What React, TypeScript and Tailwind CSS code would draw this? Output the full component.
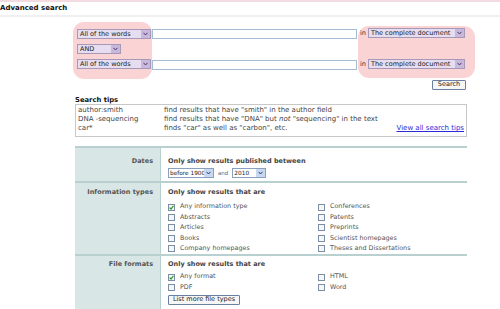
import type { ReactNode } from "react";

const font = { fontFamily: '"DejaVu Sans", Verdana, sans-serif' };

function Chevron({ color }: { color: string }) {
  return (
    <svg width="5" height="4" viewBox="0 0 5 4">
      <path d="M0.5 0.8 L2.5 3 L4.5 0.8" fill="none" stroke={color} strokeWidth="1" />
    </svg>
  );
}

function Select({ label, width, tone = "lavender" }: { label: string; width: string; tone?: "lavender" | "blue" }) {
  const lav = tone === "lavender";
  return (
    <div className={`flex h-[10px] items-stretch border ${lav ? "border-[#a898b8] bg-[#e6def0]" : "border-[#8aa0c0] bg-white"} ${width}`}>
      <span
        className={`flex-1 overflow-hidden whitespace-nowrap leading-[8px] text-[#222] ${
          lav ? "pl-[2px] text-[6.5px]" : "pl-[1px] text-[5.8px]"
        }`}
      >
        {label}
      </span>
      <span className={`flex h-full w-[9px] items-center justify-center ${lav ? "bg-[#c8b8dc]" : "bg-[#c8d8f0]"}`}>
        <Chevron color={lav ? "#4a3a6a" : "#2a3a6a"} />
      </span>
    </div>
  );
}

function Check({ label, checked = false }: { label: string; checked?: boolean }) {
  return (
    <div className="flex h-[10.4px] items-center gap-[5px]">
      <span className="flex h-[7px] w-[7px] items-center justify-center border border-[#7d8ea4] bg-[#f4f6f8]">
        {checked && (
          <svg width="5" height="5" viewBox="0 0 5 5">
            <path d="M0.6 2.6 L2 4 L4.4 0.8" fill="none" stroke="#2a9a2a" strokeWidth="1.2" />
          </svg>
        )}
      </span>
      <span className="text-[6.4px] text-[#555]">{label}</span>
    </div>
  );
}

function Row({ label, children, top, last = false }: { label: string; children: ReactNode; top: string; last?: boolean }) {
  return (
    <div className={`flex ${last ? "" : "border-b-2 border-[#b8d0d0]"}`}>
      <div className={`w-[85px] shrink-0 bg-[#d8e6e6] pr-[7px] text-right text-[6.5px] font-bold leading-[8px] text-[#555] ${top}`}>
        {label}
      </div>
      <div className={`flex-1 border-l border-[#b8d0d0] pl-[7px] ${top}`}>{children}</div>
    </div>
  );
}

export default function App() {
  return (
    <div className="h-[309px] w-[500px] overflow-hidden bg-white text-[#333]" style={font}>
      <div className="h-[2px] bg-[#f2dce2]" />
      <div className="border-b-2 border-[#f0f0f0] pb-[2px] pt-[2px] text-[7px] font-bold leading-[9px] text-[#111]">
        Advanced search
      </div>

      <div className="ml-[73px] mt-[5px] flex">
        <div className="flex h-[57px] w-[79px] flex-col gap-[5px] rounded-[11px] bg-[#fad4d4] pl-[4px] pt-[7px]">
          <Select label="All of the words" width="w-[74px]" />
          <Select label="AND" width="w-[44px]" />
          <Select label="All of the words" width="w-[74px]" />
        </div>
        <div className="flex w-[206px] flex-col gap-[21px] pt-[7px]">
          <div className="h-[10px] w-[205px] border border-[#a4bcd4] bg-white" />
          <div className="h-[10px] w-[205px] border border-[#a4bcd4] bg-white" />
        </div>
        <div className="mt-[4px] flex h-[52px] w-[117px] flex-col gap-[21px] rounded-[11px] bg-[#fad4d4] pl-[2px] pt-[2px]">
          <div className="flex items-center gap-[2px]">
            <span className="text-[6.5px] leading-[10px] text-[#333]">in</span>
            <Select label="The complete document" width="w-[97px]" />
          </div>
          <div className="flex items-center gap-[2px]">
            <span className="text-[6.5px] leading-[10px] text-[#333]">in</span>
            <Select label="The complete document" width="w-[97px]" />
          </div>
        </div>
      </div>

      <div className="ml-[432px] mt-[1px] flex h-[10px] w-[34px] items-center justify-center rounded-[1px] border border-[#6a80a0] bg-[#f6f6f6] text-[6.5px] text-[#222]">
        Search
      </div>

      <div className="ml-[75px] mt-[6px] w-[392px]">
        <div className="text-[6.8px] font-bold leading-[8px] text-[#111]">Search tips</div>
        <div className="border border-[#c8c8c8] px-[2px] pb-[3px] pt-[1px] text-[7px] leading-[9px] text-[#444]">
          <div className="flex">
            <span className="w-[86px]">author:smith</span>
            <span>find results that have "smith" in the author field</span>
          </div>
          <div className="flex">
            <span className="w-[86px]">DNA -sequencing</span>
            <span>
              find results that have "DNA" but <i>not</i> "sequencing" in the text
            </span>
          </div>
          <div className="flex">
            <span className="w-[86px]">car*</span>
            <span className="flex-1">finds "car" as well as "carbon", etc.</span>
            <span className="text-[#2a2ad8] underline">View all search tips</span>
          </div>
        </div>
      </div>

      <div className="ml-[75px] mt-[9px] w-[392px] border-t-2 border-[#b8d0d0]">
        <Row label="Dates" top="pt-[9px]">
          <div className="text-[6.5px] font-bold leading-[8px] text-[#444]">Only show results published between</div>
          <div className="mt-[3px] flex items-center gap-[4px] pb-[3px]">
            <Select label="before 1900" width="w-[46px]" tone="blue" />
            <span className="text-[5.5px] text-[#666]">and</span>
            <Select label="2010" width="w-[34px]" tone="blue" />
          </div>
        </Row>
        <Row label="Information types" top="pt-[5px]">
          <div className="text-[6.5px] font-bold leading-[8px] text-[#444]">Only show results that are</div>
          <div className="mt-[6px] flex">
            <div className="w-[150px]">
              <Check label="Any information type" checked />
              <Check label="Abstracts" />
              <Check label="Articles" />
              <Check label="Books" />
              <Check label="Company homepages" />
            </div>
            <div>
              <Check label="Conferences" />
              <Check label="Patents" />
              <Check label="Preprints" />
              <Check label="Scientist homepages" />
              <Check label="Theses and Dissertations" />
            </div>
          </div>
        </Row>
        <Row label="File formats" top="pt-[4px]" last>
          <div className="text-[6.5px] font-bold leading-[8px] text-[#444]">Only show results that are</div>
          <div className="mt-[4px] flex">
            <div className="w-[150px]">
              <Check label="Any format" checked />
              <Check label="PDF" />
            </div>
            <div>
              <Check label="HTML" />
              <Check label="Word" />
            </div>
          </div>
          <div className="mt-[2px] flex h-[10px] w-[72px] items-center justify-center rounded-[1px] border border-[#6a80a0] bg-[#f6f6f6] text-[6.5px] text-[#222]">
            List more file types
          </div>
          <div className="h-[6px]" />
        </Row>
      </div>
    </div>
  );
}
